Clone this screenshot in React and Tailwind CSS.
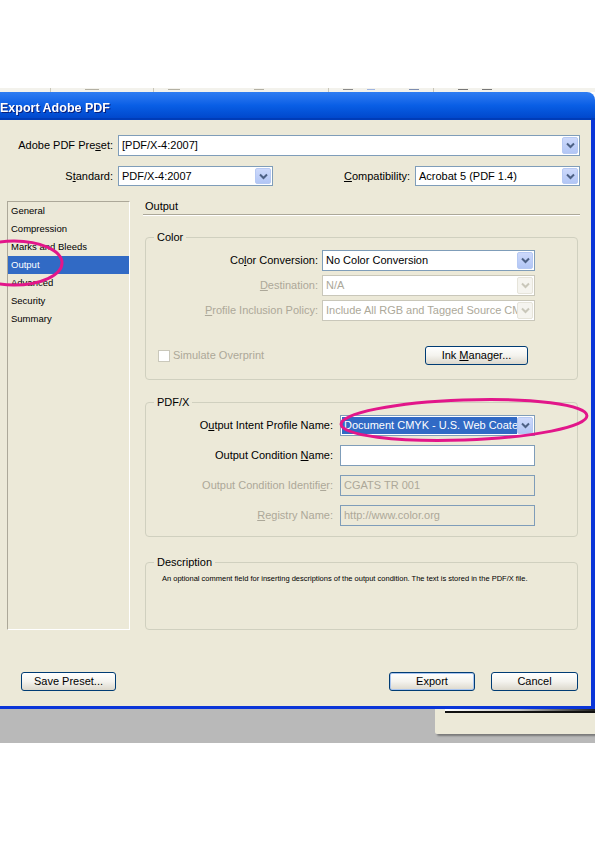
import React from "react";

const Arrow = ({ disabled }) => (
  <div
    className={
      disabled
        ? "w-[16px] h-full flex items-center justify-center bg-[#f5f4ef] border border-[#e6e4da] rounded-[2px]"
        : "w-[16px] h-full flex items-center justify-center bg-gradient-to-b from-[#cdd9fb] to-[#b2c6f5] border border-[#b6c9f3] rounded-[2px]"
    }
  >
    <svg width="9" height="7" viewBox="0 0 9 7">
      <path
        d="M1 1.5 L4.5 5 L8 1.5"
        fill="none"
        stroke={disabled ? "#c9c7ba" : "#4d6185"}
        strokeWidth="2"
      />
    </svg>
  </div>
);

const Combo = ({ value, width, height = "h-[21px]", disabled, selected }) => (
  <div
    className={`${width} ${height} flex items-stretch p-[1px] border ${
      disabled ? "border-[#c9c7ba] bg-white text-[#aca899]" : "border-[#7f9db9] bg-white text-black"
    }`}
  >
    <div className="flex-1 min-w-0 flex items-center overflow-hidden">
      <span
        className={`whitespace-nowrap pl-[2px] pr-[1px] leading-[17px] ${
          selected ? "bg-[#316ac5] text-white" : ""
        }`}
      >
        {value}
      </span>
    </div>
    <Arrow disabled={disabled} />
  </div>
);

const Field = ({ value, width, disabled }) => (
  <div
    className={`${width} h-[21px] flex items-center px-[3px] border whitespace-nowrap ${
      disabled ? "border-[#7f9db9] bg-[#ece9d8] text-[#aca899]" : "border-[#7f9db9] bg-white"
    }`}
  >
    {value}
  </div>
);

const XPButton = ({ children, width, isDefault }) => (
  <button
    className={`${width} h-[19px] rounded-[3px] border border-[#003c74] bg-gradient-to-b from-white via-[#f4f3ee] to-[#dcd8cc] text-[11px] leading-none text-black ${
      isDefault ? "shadow-[inset_0_0_0_1px_#a8c4ef]" : ""
    }`}
  >
    {children}
  </button>
);

const listItems = ["General", "Compression", "Marks and Bleeds", "Output", "Advanced", "Security", "Summary"];

export default function App() {
  return (
    <div className="relative w-[595px] h-[842px] bg-white overflow-hidden font-['Liberation_Sans',Arial,sans-serif] text-[11px] text-black">
      <div className="h-[88px]" />

      {/* toolbar peeking out above the dialog */}
      <div className="h-[4px] flex items-end gap-[14px] pl-[50px] bg-[#f3f2ec]">
        <span className="w-[1px] h-[4px] bg-[#c9c6b8]" />
        <span className="w-[14px] h-[3px] border-t border-[#b3b0a3] ml-[20px]" />
        <span className="w-[1px] h-[4px] bg-[#c9c6b8] ml-[40px]" />
        <span className="w-[12px] h-[3px] border-t border-[#b3b0a3]" />
        <span className="w-[10px] h-[3px] border-t border-[#b3b0a3] ml-[60px]" />
        <span className="w-[1px] h-[4px] bg-[#c9c6b8] ml-[50px]" />
        <span className="w-[10px] h-[3px] border-t border-[#8a8a8a]" />
        <span className="w-[8px] h-[3px] border-t border-[#9fb5e0]" />
        <span className="w-[10px] h-[3px] border-t border-[#7d8db0] ml-[20px]" />
        <span className="w-[1px] h-[4px] bg-[#c9c6b8]" />
        <span className="w-[10px] h-[3px] border-t border-[#777] ml-[10px]" />
        <span className="w-[10px] h-[3px] border-t border-[#777]" />
      </div>

      {/* dialog */}
      <div>
        <div className="h-[28px] rounded-tr-[8px] bg-gradient-to-b from-[#2f7df2] via-[#0a5fe6] to-[#0148cd] border-b-[2px] border-[#003cb8] flex items-end">
          <span className="text-white font-bold text-[12.5px] drop-shadow-[1px_1px_0_#0a1e7a]">
            Export Adobe PDF
          </span>
        </div>

        <div className="h-[589px] bg-[#ece9d8] border-r-[4px] border-b-[3px] border-[#0a35d8] flex flex-col">
          {/* preset row */}
          <div className="mt-[15px] flex items-center pr-[11px]">
            <div className="w-[113px] text-right">
              Adobe PDF Pre<u>s</u>et:
            </div>
            <div className="ml-[5px]">
              <Combo value="[PDF/X-4:2007]" width="w-[462px]" />
            </div>
          </div>

          {/* standard row */}
          <div className="mt-[10px] flex items-center pr-[11px]">
            <div className="w-[113px] text-right">
              S<u>t</u>andard:
            </div>
            <div className="ml-[5px]">
              <Combo value="PDF/X-4:2007" width="w-[155px]" height="h-[20px]" />
            </div>
            <div className="flex-1 text-right">
              <u>C</u>ompatibility:
            </div>
            <div className="ml-[5px]">
              <Combo value="Acrobat 5 (PDF 1.4)" width="w-[165px]" height="h-[20px]" />
            </div>
          </div>

          {/* main area */}
          <div className="mt-[15px] flex pl-[7px] h-[429px]">
            <div className="w-[123px] h-full border border-t-[#aca899] border-l-[#aca899] border-r-white border-b-white text-[9.5px]">
              {listItems.map((item) => (
                <div
                  key={item}
                  className={`h-[18px] pl-[3px] flex items-center ${
                    item === "Output" ? "bg-[#316ac5] text-white" : ""
                  }`}
                >
                  {item}
                </div>
              ))}
            </div>

            <div className="ml-[13px] w-[437px] flex flex-col">
              <div className="h-[14px] border-b border-[#aca899] shadow-[0_1px_0_#fff] pl-[2px] leading-[10px]">
                Output
              </div>

              {/* color */}
              <fieldset className="mt-[15px] ml-[2px] w-[433px] h-[150px] border border-[#d0d0bf] rounded-[4px]">
                <legend className="ml-[8px] px-[3px] leading-[14px]">Color</legend>
                <div className="mt-[6px] flex items-center">
                  <div className="w-[172px] text-right">
                    Co<u>l</u>or Conversion:
                  </div>
                  <div className="ml-[4px]">
                    <Combo value="No Color Conversion" width="w-[213px]" />
                  </div>
                </div>
                <div className="mt-[4px] flex items-center text-[#aca899]">
                  <div className="w-[172px] text-right">
                    <u>D</u>estination:
                  </div>
                  <div className="ml-[4px]">
                    <Combo value="N/A" width="w-[213px]" disabled />
                  </div>
                </div>
                <div className="mt-[4px] flex items-center text-[#aca899]">
                  <div className="w-[172px] text-right">
                    <u>P</u>rofile Inclusion Policy:
                  </div>
                  <div className="ml-[4px]">
                    <Combo value="Include All RGB and Tagged Source CMYK" width="w-[213px]" disabled />
                  </div>
                </div>
                <div className="mt-[25px] flex items-center justify-between pl-[12px] pr-[49px]">
                  <div className="flex items-center gap-[3px] text-[#aca899]">
                    <span className="w-[12px] h-[12px] border border-[#cac8bb] bg-white" />
                    Simulate Overprint
                  </div>
                  <XPButton width="w-[103px]">
                    Ink <u>M</u>anager...
                  </XPButton>
                </div>
              </fieldset>

              {/* pdf/x */}
              <fieldset className="mt-[15px] ml-[2px] w-[433px] h-[142px] border border-[#d0d0bf] rounded-[4px]">
                <legend className="ml-[8px] px-[3px] leading-[14px]">PDF/X</legend>
                <div className="mt-[6px] flex items-center">
                  <div className="w-[187px] text-right">
                    O<u>u</u>tput Intent Profile Name:
                  </div>
                  <div className="ml-[7px]">
                    <Combo value="Document CMYK - U.S. Web Coated (SWOP) v2" width="w-[195px]" selected />
                  </div>
                </div>
                <div className="mt-[9px] flex items-center">
                  <div className="w-[187px] text-right">
                    Output Condition <u>N</u>ame:
                  </div>
                  <div className="ml-[7px]">
                    <Field value="" width="w-[195px]" />
                  </div>
                </div>
                <div className="mt-[9px] flex items-center text-[#aca899]">
                  <div className="w-[187px] text-right">
                    Output Condition Identifi<u>e</u>r:
                  </div>
                  <div className="ml-[7px]">
                    <Field value="CGATS TR 001" width="w-[195px]" disabled />
                  </div>
                </div>
                <div className="mt-[9px] flex items-center text-[#aca899]">
                  <div className="w-[187px] text-right">
                    <u>R</u>egistry Name:
                  </div>
                  <div className="ml-[7px]">
                    <Field value="http://www.color.org" width="w-[195px]" disabled />
                  </div>
                </div>
              </fieldset>

              {/* description */}
              <fieldset className="mt-[18px] ml-[2px] w-[433px] h-[75px] border border-[#d0d0bf] rounded-[4px]">
                <legend className="ml-[8px] px-[3px] leading-[14px]">Description</legend>
                <p className="mt-[4px] pl-[16px] text-[7.5px] whitespace-nowrap">
                  An optional comment field for inserting descriptions of the output condition. The text is stored in the PDF/X file.
                </p>
              </fieldset>
            </div>
          </div>

          {/* buttons */}
          <div className="mt-[42px] flex items-center pl-[21px] pr-[13px]">
            <XPButton width="w-[95px]">Save Preset...</XPButton>
            <div className="flex-1" />
            <XPButton width="w-[86px]" isDefault>
              Export
            </XPButton>
            <div className="ml-[16px]">
              <XPButton width="w-[87px]">Cancel</XPButton>
            </div>
          </div>
        </div>
      </div>

      {/* desktop area below dialog */}
      <div className="h-[34px] bg-[#b9b9b9] flex justify-end">
        <div className="w-[160px] h-[25px] bg-[#ece9d8] shadow-[2px_2px_2px_rgba(0,0,0,0.35)] rounded-bl-[2px] pl-[10px]">
          <div className="h-[4px] bg-white border-b-[2px] border-[#111] bg-gradient-to-r from-white via-[#c0c0c0] to-[#222]" />
        </div>
      </div>

      {/* pink annotation marks */}
      <svg className="absolute inset-0 pointer-events-none" width="595" height="842" viewBox="0 0 595 842">
        <ellipse cx="14" cy="263" rx="48" ry="22" fill="none" stroke="#e2168a" strokeWidth="3" />
        <ellipse
          cx="464"
          cy="420"
          rx="123"
          ry="20"
          fill="none"
          stroke="#e2168a"
          strokeWidth="3"
          transform="rotate(-2 464 420)"
        />
      </svg>
    </div>
  );
}
